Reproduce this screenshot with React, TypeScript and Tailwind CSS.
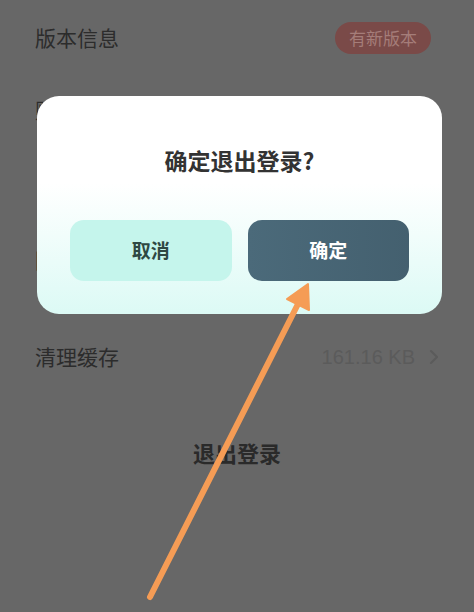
import React from "react";

const cjk = { fontFamily: '"Noto Sans CJK SC", "Liberation Sans", sans-serif' };

function Row({ label, right, h }: { label?: string; right?: React.ReactNode; h: string }) {
  return (
    <div className={`flex items-center justify-between px-[35px] ${h}`}>
      {label && <span className="text-[21px] text-[#2c2c2c]">{label}</span>}
      {right}
    </div>
  );
}

export default function App() {
  return (
    <div
      className="relative h-[612px] w-[474px] overflow-hidden bg-[#676767]"
      style={cjk}
    >
      {/* settings list, dimmed under the modal */}
      <div className="flex flex-col">
        <Row
          h="h-[76px]"
          label="版本信息"
          right={
            <span className="mr-[8px] flex h-[32px] items-center rounded-full bg-[#7a4a48] px-[14px] text-[17px] text-[#a57d79]">
              有新版本
            </span>
          }
        />
        <Row h="h-[68px]" label="账号与安全" />
        <Row h="h-[76px]" />
        <Row h="h-[80px]" label="隐私政策" />
        <Row
          h="h-[114px]"
          label="清理缓存"
          right={
            <span className="flex items-center gap-[14px] text-[#5b5b5b]">
              <span className="text-[20px]" style={{ fontFamily: '"Liberation Sans", sans-serif' }}>
                161.16 KB
              </span>
              <svg width="10" height="16" viewBox="0 0 10 16" fill="none">
                <path d="M2 2l6 6-6 6" stroke="#5b5b5b" strokeWidth="2" strokeLinecap="round" strokeLinejoin="round" />
              </svg>
            </span>
          }
        />
        <div className="mt-[22px] flex h-[32px] items-center justify-center">
          <span className="text-[22px] font-bold text-[#2a2a2a]">退出登录</span>
        </div>
      </div>

      {/* confirm dialog */}
      <div className="absolute left-[37px] top-[96px] flex h-[218px] w-[405px] flex-col rounded-[22px] bg-gradient-to-b from-white from-40% to-[#dcfaf5] px-[33px] pt-[52px]">
        <div className="flex h-[24px] items-center justify-center">
          <span className="text-[23px] font-bold text-[#333]">确定退出登录?</span>
        </div>
        <div className="mt-[48px] grid grid-cols-2 gap-[16px]">
          <button className="flex h-[61px] items-center justify-center rounded-[14px] bg-[#c5f5ec] text-[19px] font-bold text-[#2e4843]">
            取消
          </button>
          <button className="flex h-[61px] items-center justify-center rounded-[14px] bg-gradient-to-r from-[#4b6a7a] to-[#44606f] text-[19px] font-bold text-white">
            确定
          </button>
        </div>
      </div>

      {/* annotation arrow */}
      <svg className="pointer-events-none absolute inset-0" width="474" height="612" viewBox="0 0 474 612">
        <line x1="150" y1="597" x2="299" y2="302" stroke="#f59c55" strokeWidth="6" strokeLinecap="round" />
        <polygon points="308,284 309,310 287,299" fill="#f59c55" stroke="#f59c55" strokeWidth="2" strokeLinejoin="round" />
      </svg>
    </div>
  );
}
